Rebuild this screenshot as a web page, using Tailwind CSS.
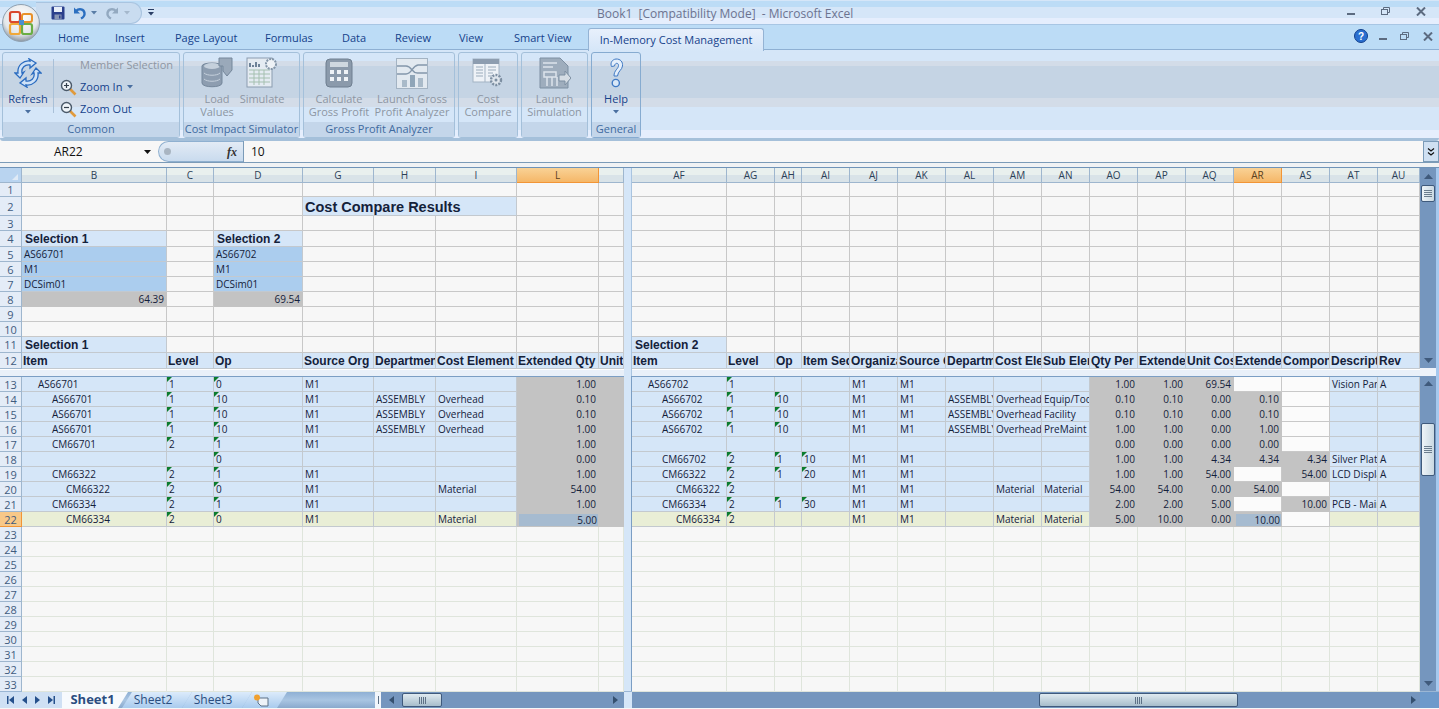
<!DOCTYPE html>
<html lang="en">
<head>
<meta charset="utf-8">
<title>Book1 [Compatibility Mode] - Microsoft Excel</title>
<script src="https://cdn.jsdelivr.net/npm/@tailwindcss/browser@4"></script>
</head>
<body class="m-0 overflow-hidden">
<div class="relative flex h-[709px] w-[1439px] flex-col overflow-hidden bg-[#f7f7f7] font-['Open_Sans',sans-serif] text-[11px] text-[#15428b]">

  <!-- office button -->
  <div class="absolute left-[2px] top-[4px] z-10 h-[38px] w-[38px]">
    <svg viewBox="0 0 38 38" class="h-full w-full">
      <defs><radialGradient id="orb" cx="50%" cy="35%" r="65%"><stop offset="0" stop-color="#ffffff"/><stop offset="0.7" stop-color="#e4e7ea"/><stop offset="1" stop-color="#8c97a3"/></radialGradient></defs>
      <circle cx="19" cy="19" r="18.5" fill="url(#orb)" stroke="#8fa0b0"/>
      <rect x="8" y="8" width="10" height="10" rx="2" fill="none" stroke="#d9482e" stroke-width="2.2"/>
      <rect x="20" y="10" width="10" height="8" rx="2" fill="none" stroke="#e8912a" stroke-width="2"/>
      <rect x="8" y="20" width="10" height="10" rx="2" fill="none" stroke="#f0a83a" stroke-width="2.2"/>
      <rect x="20" y="20" width="10" height="10" rx="2" fill="none" stroke="#6aae44" stroke-width="2.2"/>
      <rect x="17" y="16" width="5" height="5" fill="#4a8fd0"/>
    </svg>
  </div>

  <!-- title bar -->
  <div class="relative flex h-[25px] shrink-0 items-start border-b border-[#a8c6e4] bg-[linear-gradient(#d5e6f8_0,#d5e6f8_1px,#bcdcf6_1px,#bcdcf6_7px,#d5e6f8_7px,#d5e6f8_18px,#e5eefd_18px)]">
    <div class="ml-[36px] mt-[2px] flex h-[22px] w-[106px] items-center rounded-r-full border border-l-0 border-[#a9c4e0] bg-[#c9dcf0] pl-[15px]">
      <svg viewBox="0 0 14 14" class="h-[14px] w-[14px]"><rect x="0.5" y="0.5" width="13" height="13" rx="1" fill="#2b3f8c"/><rect x="3" y="1" width="8" height="5" fill="#e8eef8"/><rect x="3.5" y="8.5" width="7" height="5" fill="#8a97b5"/><rect x="8" y="9.5" width="1.5" height="3" fill="#2b3f8c"/></svg>
      <svg viewBox="0 0 14 14" class="ml-[8px] h-[14px] w-[14px]" fill="none"><path d="M3 5 C6 2 11 3 11.5 7 C11.8 9.5 10 11.5 8 12.5" stroke="#2c6fc0" stroke-width="2.4"/><path d="M1 1.5 V7.5 H7 Z" fill="#2c6fc0"/></svg>
      <svg viewBox="0 0 6 4" class="ml-[4px] h-[4px] w-[6px]"><path d="M0 0H6L3 3.5Z" fill="#5a7da6"/></svg>
      <svg viewBox="0 0 14 14" class="ml-[8px] h-[14px] w-[14px]" fill="none"><path d="M11 5 C8 2 3 3 2.5 7 C2.2 9.5 4 11.5 6 12.5" stroke="#93a9c0" stroke-width="2.4"/><path d="M13 1.5 V7.5 H7 Z" fill="#93a9c0"/></svg>
      <svg viewBox="0 0 6 4" class="ml-[5px] h-[4px] w-[6px]"><path d="M0 0H6L3 3.5Z" fill="#a5b8cc"/></svg>
    </div>
    <svg viewBox="0 0 6 7" class="ml-[6px] mt-[9px] h-[7px] w-[6px]"><path d="M0 0H6V1H0ZM0 3H6L3 6.5Z" fill="#2a3f66"/></svg>
    <div class="absolute left-[597px] top-[6px] whitespace-nowrap text-[12px] leading-[16px] text-[#6d7390]">Book1&nbsp; [Compatibility Mode]&nbsp; - Microsoft Excel</div>
    <div class="ml-auto mr-[13px] mt-[6px] flex items-center gap-[26px]">
      <svg viewBox="0 0 8 3" class="mt-[7px] h-[3px] w-[8px]"><rect width="8" height="2" fill="#5c6b80"/></svg>
      <svg viewBox="0 0 9 8" class="h-[8px] w-[9px]" fill="none" stroke="#5c6b80"><rect x="0.5" y="2.5" width="6" height="5"/><path d="M2.5 2V0.5H8.5V5.5H7"/></svg>
      <svg viewBox="0 0 10 9" class="h-[9px] w-[10px]"><path d="M1 0.5L9 8.5M9 0.5L1 8.5" stroke="#5c6b80" stroke-width="2"/></svg>
    </div>
  </div>

  <!-- tab strip -->
  <div class="flex h-[24px] shrink-0 items-center bg-[#bcdcf6] pl-[58px] pt-[3px] text-[11px] text-[#15428b]">
    <span class="w-[57px]">Home</span>
    <span class="w-[60px]">Insert</span>
    <span class="w-[90px]">Page Layout</span>
    <span class="w-[77px]">Formulas</span>
    <span class="w-[53px]">Data</span>
    <span class="w-[64px]">Review</span>
    <span class="w-[55px]">View</span>
    <span class="w-[74px]">Smart View</span>
    <span class="z-[1] -mb-[2px] flex h-[23px] w-[176px] items-center justify-center rounded-t-[3px] border border-b-0 border-[#94b3d4] bg-[linear-gradient(#e8f0fc,#d5e6f8)]">In-Memory Cost Management</span>
    <div class="ml-auto mr-[6px] -mt-[5px] flex items-center">
      <svg viewBox="0 0 14 14" class="h-[14px] w-[14px]"><circle cx="7" cy="7" r="6.5" fill="#2a6fd0" stroke="#123f8c"/><text x="7" y="10.5" text-anchor="middle" font-size="10" font-weight="700" fill="#fff" font-family="Liberation Sans">?</text></svg>
      <svg viewBox="0 0 8 3" class="ml-[11px] mt-[6px] h-[3px] w-[8px]"><rect width="8" height="2" fill="#5c6b80"/></svg>
      <svg viewBox="0 0 9 8" class="ml-[13px] h-[8px] w-[9px]" fill="none" stroke="#5c6b80"><rect x="0.5" y="2.5" width="6" height="5"/><path d="M2.5 2V0.5H8.5V5.5H7"/></svg>
      <svg viewBox="0 0 10 9" class="ml-[14px] h-[9px] w-[10px]"><path d="M1 0.5L9 8.5M9 0.5L1 8.5" stroke="#5c6b80" stroke-width="2"/></svg>
    </div>
  </div>

  <!-- ribbon -->
  <div class="flex h-[92px] shrink-0 gap-[3px] rounded-b-[3px] border-t border-b-[3px] border-t-[#8eb0d3] border-b-[#a5c0da] bg-[linear-gradient(#d5e6f8_0,#d5e6f8_11px,#d3dce8_11px,#d3dce8_16px,#c5d4e4_16px,#c5d4e4_48px,#d3dce8_48px,#d3dce8_57px,#d5e6f8_57px,#d5e6f8_80px,#e5eefd_80px)] pl-[2px] pt-[2px]">

    <div class="flex h-[86px] w-[178px] flex-col rounded-[3px] border border-[#a4c0da]">
      <div class="flex h-[69px] flex-1">
        <div class="flex w-[50px] flex-col items-center pt-[5px]">
          <svg viewBox="0 0 28 30" class="h-[30px] w-[28px]" fill="#cfe2f7" stroke="#2b6cc0" stroke-width="1.3"><path d="M4 15 C3 7 10 2 16 3 L15 0.8 L22 5 L16 10 L16 7 C11 6 7 10 8 15 L10 14 L6 20 L1 15 Z"/><path d="M24 15 C25 23 18 28 12 27 L13 29.2 L6 25 L12 20 L12 23 C17 24 21 20 20 15 L18 16 L22 10 L27 15 Z"/></svg>
          <span class="mt-[4px] leading-[13px] text-[#15428b]">Refresh</span>
          <svg viewBox="0 0 6 4" class="mt-[5px] h-[4px] w-[6px]"><path d="M0 0H6L3 3.5Z" fill="#4a6fa0"/></svg>
        </div>
        <div class="mt-[6px] h-[54px] w-px bg-[#a9c0d8]"></div>
        <div class="flex flex-col pl-[6px] pt-[3px]">
          <div class="h-[20px] pl-[20px] leading-[18px] text-[#8d96a3]">Member Selection</div>
          <div class="flex h-[22px] items-center">
            <svg viewBox="0 0 17 17" class="h-[17px] w-[17px]" fill="none"><path d="M10 10L15.5 15.5" stroke="#e09a3c" stroke-width="2.6"/><circle cx="6.5" cy="6.5" r="5" fill="#eef3f8" stroke="#4b5a6a" stroke-width="1.4"/><path d="M4 6.5H9M6.5 4V9" stroke="#333f4c" stroke-width="1.2"/></svg>
            <span class="ml-[3px]">Zoom In</span>
            <svg viewBox="0 0 6 4" class="ml-[5px] h-[4px] w-[6px]"><path d="M0 0H6L3 3.5Z" fill="#4a6fa0"/></svg>
          </div>
          <div class="flex h-[22px] items-center">
            <svg viewBox="0 0 17 17" class="h-[17px] w-[17px]" fill="none"><path d="M10 10L15.5 15.5" stroke="#e09a3c" stroke-width="2.6"/><circle cx="6.5" cy="6.5" r="5" fill="#eef3f8" stroke="#4b5a6a" stroke-width="1.4"/><path d="M4 6.5H9" stroke="#333f4c" stroke-width="1.2"/></svg>
            <span class="ml-[3px]">Zoom Out</span>
          </div>
        </div>
      </div>
      <div class="h-[15px] bg-[#c4d6ea] text-center leading-[14px] text-[#3e6aa0]">Common</div>
    </div>

    <div class="flex h-[86px] w-[117px] flex-col rounded-[3px] border border-[#a4c0da]">
      <div class="flex flex-1 pl-[11px] text-center leading-[13px] text-[#8d96a3]">
        <div class="flex w-[44px] flex-col items-center pt-[4px]">
          <svg viewBox="0 0 32 32" class="h-[32px] w-[32px]"><path d="M1 9 C1 5 21 5 21 9 V26 C21 31 1 31 1 26Z" fill="#8d9db0" stroke="#75879b"/><ellipse cx="11" cy="9" rx="8" ry="3" fill="#c5d0dc"/><path d="M3 16 C6 19 16 19 19 16M3 22 C6 25 16 25 19 22" stroke="#c5d0dc" fill="none"/><path d="M18 1H31V13L26 19L22 14V9H18Z" fill="#9aa9ba" stroke="#75879b"/></svg>
          <span class="mt-[3px]">Load<br>Values</span>
        </div>
        <div class="flex w-[46px] flex-col items-center pt-[4px]">
          <svg viewBox="0 0 32 32" class="h-[32px] w-[32px]" fill="none"><rect x="1" y="1" width="25" height="29" fill="#e4ebf2" stroke="#8b9caf"/><path d="M4 10V6M7 10V8M10 10V5M13 10V7" stroke="#6d8298" stroke-width="2"/><path d="M3 13H24M3 17H24M3 21H24M3 25H24M8 13V28M13 13V28M18 13V28" stroke="#a5c0b0"/><circle cx="25" cy="7" r="5" fill="#eef2f6" stroke="#8395a8" stroke-width="2" stroke-dasharray="2 1"/></svg>
          <span class="mt-[3px]">Simulate</span>
        </div>
      </div>
      <div class="h-[15px] whitespace-nowrap bg-[#c4d6ea] text-center leading-[14px] text-[#3e6aa0]">Cost Impact Simulator</div>
    </div>

    <div class="flex h-[86px] w-[152px] flex-col rounded-[3px] border border-[#a4c0da]">
      <div class="flex flex-1 text-center leading-[13px] text-[#8d96a3]">
        <div class="flex w-[70px] flex-col items-center whitespace-nowrap pt-[5px]">
          <svg viewBox="0 0 28 31" class="h-[31px] w-[28px]"><rect x="1" y="1" width="26" height="28" rx="4" fill="#8b9aab" stroke="#6f7f90"/><rect x="5" y="4" width="18" height="5" fill="#cfd8e0"/><g fill="#eef2f6"><rect x="5" y="12" width="4" height="4"/><rect x="12" y="12" width="4" height="4"/><rect x="19" y="12" width="4" height="4"/><rect x="5" y="19" width="4" height="4"/><rect x="12" y="19" width="4" height="4"/><rect x="19" y="19" width="4" height="4"/></g></svg>
          <span class="mt-[3px]">Calculate<br>Gross Profit</span>
        </div>
        <div class="flex w-[76px] flex-col items-center whitespace-nowrap pt-[5px]">
          <svg viewBox="0 0 32 31" class="h-[31px] w-[32px]" fill="none"><rect x="0.5" y="0.5" width="31" height="30" fill="#e2e9f0" stroke="#a3b3c3"/><path d="M1 8H10C16 8 16 16 22 15H31M1 16H10C16 16 16 8 22 7H31" stroke="#8497ab" stroke-width="1.4"/><rect x="6" y="22" width="5" height="7" fill="#a9bac9"/><rect x="14" y="17" width="5" height="12" fill="#8fa5b8"/><rect x="22" y="20" width="5" height="9" fill="#a9bac9"/></svg>
          <span class="mt-[3px]">Launch Gross<br>Profit Analyzer</span>
        </div>
      </div>
      <div class="h-[15px] bg-[#c4d6ea] text-center leading-[14px] text-[#3e6aa0]">Gross Profit Analyzer</div>
    </div>

    <div class="flex h-[86px] w-[60px] flex-col rounded-[3px] border border-[#a4c0da]">
      <div class="flex flex-1 flex-col items-center pt-[5px] text-center leading-[13px] text-[#8d96a3]">
        <svg viewBox="0 0 32 30" class="h-[30px] w-[32px]"><rect x="1" y="1" width="26" height="23" fill="#eef2f7" stroke="#a3b3c3"/><rect x="1" y="1" width="26" height="5" fill="#8d9db0"/><path d="M4 9H11M4 12H11M4 15H11M4 18H11M16 9H24M16 12H24M16 15H21M16 18H20" stroke="#9aabbb"/><path d="M13 6V24" stroke="#a3b3c3"/><circle cx="24" cy="22" r="5" fill="#dfe6ed" stroke="#7d8fa2" stroke-width="2.4" stroke-dasharray="2 1.2"/><circle cx="24" cy="22" r="1.5" fill="#7d8fa2"/></svg>
        <span class="mt-[4px]">Cost<br>Compare</span>
      </div>
      <div class="h-[15px] bg-[#c4d6ea]"></div>
    </div>

    <div class="flex h-[86px] w-[67px] flex-col rounded-[3px] border border-[#a4c0da]">
      <div class="flex flex-1 flex-col items-center pt-[4px] text-center leading-[13px] text-[#8d96a3]">
        <svg viewBox="0 0 32 32" class="h-[32px] w-[32px]" fill="none"><path d="M1 1H21L29 9V31H1Z" fill="#9eadbd" stroke="#7d8fa2"/><path d="M4 6H18M4 10H14M5 15H17V20H5ZM8 20V29M13 20V29M18 20V29" stroke="#dde4eb" stroke-width="1.5"/><path d="M20 18H26V14L32 21L26 28V24H20Z" fill="#d4dce4" stroke="#7d8fa2"/></svg>
        <span class="mt-[3px]">Launch<br>Simulation</span>
      </div>
      <div class="h-[15px] bg-[#c4d6ea]"></div>
    </div>

    <div class="flex h-[86px] w-[50px] flex-col rounded-[3px] border border-[#86abd0]">
      <div class="flex flex-1 flex-col items-center pt-[5px] text-center leading-[13px] text-[#15428b]">
        <svg viewBox="0 0 16 30" class="h-[30px] w-[16px]" fill="none"><path d="M3.5 8.5 C2 5 4 1.5 8 1 C12.5 0.8 15 4 14.5 8 C14 12 10 13 9.5 18 H6 C6 12 10.5 11 10.5 7.5 C10.5 4.5 7 4.5 6.5 8 Z" fill="#e5effb" stroke="#3f79c4"/><circle cx="7.8" cy="25" r="3.6" fill="#d9e8f8" stroke="#3f79c4" stroke-width="1.4"/></svg>
        <span class="mt-[4px]">Help</span>
        <svg viewBox="0 0 6 4" class="mt-[5px] h-[4px] w-[6px]"><path d="M0 0H6L3 3.5Z" fill="#4a6fa0"/></svg>
      </div>
      <div class="h-[15px] bg-[#c4d6ea] text-center leading-[14px] text-[#3e6aa0]">General</div>
    </div>
  </div>

  <!-- formula bar -->
  <div class="flex h-[22px] shrink-0 items-center border-b border-[#7b9bb8] bg-[#f7f7f7] text-[#111]">
    <span class="ml-[54px] w-[90px] text-[12px]">AR22</span>
    <svg viewBox="0 0 7 4" class="h-[4px] w-[7px]"><path d="M0 0H7L3.5 4Z" fill="#111"/></svg>
    <div class="ml-[7px] flex h-[21px] w-[85px] items-center justify-between rounded-l-full border border-r-0 border-[#8fb0d0] bg-[linear-gradient(#e3ebf5,#c9dbee)] pl-[5px] pr-[6px]">
      <span class="h-[7px] w-[7px] rounded-full bg-[#a9b5c2]"></span>
      <span class="font-['Liberation_Serif',serif] text-[12px] font-bold italic leading-none text-[#333]">fx</span>
    </div>
    <div class="flex h-[21px] flex-1 items-center border-l border-[#7b9bb8] pl-[7px] text-[12px]">10</div>
    <div class="flex h-[21px] w-[16px] items-center justify-center border border-[#7b9bb8] bg-[#cfe0f2]">
      <svg viewBox="0 0 8 8" class="h-[8px] w-[8px]" fill="none" stroke="#111" stroke-width="1.2"><path d="M1 0.5L4 3L7 0.5M1 4.5L4 7L7 4.5"/></svg>
    </div>
  </div>
  <div class="h-[4px] shrink-0 bg-[#f0f2f4]"></div>

  <!-- sheet panes -->
  <div class="flex h-[524px] shrink-0 border-t border-[#6f93b8]">
    <div class="w-[624px] shrink-0">
      <div id="leftTop"></div>
      <div class="h-[8px] border-t border-b border-t-white border-b-[#7b9ec4] bg-[#e9f0f9]"></div>
      <div id="leftBottom"></div>
    </div>
    <div class="flex w-[8px] shrink-0 flex-col bg-[#d5e6f8]">
      <div class="h-[208px] border-r border-[#a9c4e0]"></div>
      <div class="flex-1 border-r border-[#7b9ec4]"></div>
    </div>
    <div class="w-[788px] shrink-0">
      <div id="rightTop"></div>
      <div class="h-[8px] border-t border-b border-t-white border-b-[#7b9ec4] bg-[#e9f0f9]"></div>
      <div id="rightBottom"></div>
    </div>
    <div class="flex w-[16px] shrink-0 flex-col">
      <div class="flex h-[200px] flex-col items-center bg-[#7596be] pt-[6px]">
        <svg viewBox="0 0 9 5" class="h-[5px] w-[9px]"><path d="M4.5 0L9 5H0Z" fill="#3f5a7c"/></svg>
        <div class="mt-[6px] flex h-[17px] w-[14px] items-center justify-center rounded-[2px] border border-[#3f5a7c] bg-[linear-gradient(90deg,#eef4f8,#c9d8e2)]">
          <svg viewBox="0 0 8 7" class="h-[7px] w-[8px]"><path d="M0 .5H8M0 2.5H8M0 4.5H8M0 6.5H8" stroke="#6b7d8e"/></svg>
        </div>
        <svg viewBox="0 0 9 5" class="mt-auto mb-[5px] h-[5px] w-[9px]"><path d="M0 0H9L4.5 5Z" fill="#3f5a7c"/></svg>
      </div>
      <div class="h-[8px] bg-[#eef3fa]"></div>
      <div class="flex flex-1 flex-col items-center bg-[#7596be] pt-[5px]">
        <svg viewBox="0 0 9 5" class="h-[5px] w-[9px]"><path d="M4.5 0L9 5H0Z" fill="#3f5a7c"/></svg>
        <div class="mt-[37px] flex h-[53px] w-[14px] items-center justify-center rounded-[2px] border border-[#3f5a7c] bg-[linear-gradient(90deg,#eef4f8,#c9d8e2)]">
          <svg viewBox="0 0 8 7" class="h-[7px] w-[8px]"><path d="M0 .5H8M0 2.5H8M0 4.5H8M0 6.5H8" stroke="#6b7d8e"/></svg>
        </div>
        <svg viewBox="0 0 9 5" class="mt-auto mb-[5px] h-[5px] w-[9px]"><path d="M0 0H9L4.5 5Z" fill="#3f5a7c"/></svg>
      </div>
    </div>
    <div class="w-[3px] shrink-0 bg-[#a5c8ee]"></div>
  </div>

  <!-- sheet tabs and horizontal scrollbars -->
  <div class="flex h-[17px] shrink-0 border-t border-[#9ab6d4] bg-[#7596be]">
    <div class="flex w-[62px] shrink-0 items-center justify-around bg-[#cfe0f4] px-[3px]">
      <svg viewBox="0 0 7 8" class="h-[8px] w-[7px]"><path d="M0 0H1.5V8H0ZM7 0V8L2 4Z" fill="#25508c"/></svg>
      <svg viewBox="0 0 5 8" class="h-[8px] w-[5px]"><path d="M5 0V8L0 4Z" fill="#25508c"/></svg>
      <svg viewBox="0 0 5 8" class="h-[8px] w-[5px]"><path d="M0 0V8L5 4Z" fill="#25508c"/></svg>
      <svg viewBox="0 0 7 8" class="h-[8px] w-[7px]"><path d="M7 0H5.5V8H7ZM0 0V8L5 4Z" fill="#25508c"/></svg>
    </div>
    <div class="flex w-[313px] shrink-0 bg-[linear-gradient(#8fb0d4,#a9c5e2,#8aa9cd)]">
      <div class="z-[3] flex w-[66px] shrink-0 items-center justify-center bg-[#f7fafd] pb-[1px] pr-[5px] text-[13px] font-bold leading-none text-[#2a4d80] [clip-path:polygon(0_0,100%_0,calc(100%-10px)_100%,0_100%)]">Sheet1</div>
      <div class="z-[2] -ml-[6px] flex w-[70px] shrink-0 items-center justify-center bg-[linear-gradient(#dcebfb,#a9cbee)] pr-[8px] text-[12px] leading-none text-[#2a4d80] [clip-path:polygon(10px_0,100%_0,calc(100%-10px)_100%,0_100%)]">Sheet2</div>
      <div class="z-[1] -ml-[10px] flex w-[70px] shrink-0 items-center justify-center bg-[linear-gradient(#dcebfb,#a9cbee)] pr-[8px] text-[12px] leading-none text-[#2a4d80] [clip-path:polygon(10px_0,100%_0,calc(100%-10px)_100%,0_100%)]">Sheet3</div>
      <div class="-ml-[10px] flex w-[45px] shrink-0 items-center justify-center bg-[linear-gradient(#dcebfb,#a9cbee)] pr-[8px] [clip-path:polygon(10px_0,100%_0,calc(100%-10px)_100%,0_100%)]">
        <svg viewBox="0 0 16 13" class="h-[13px] w-[16px]" fill="none"><path d="M5 4H15V12H8L5 9Z" fill="#eef3f8" stroke="#5d7186"/><circle cx="4" cy="3.5" r="3" fill="#f0a030"/></svg>
      </div>
    </div>
    <div class="flex w-[6px] shrink-0 items-center justify-center bg-[#f2f6fb]"><div class="h-[8px] w-px bg-[#5d7186]"></div></div>
    <div class="flex w-[21px] shrink-0 items-center justify-center"><svg viewBox="0 0 5 8" class="h-[8px] w-[5px]"><path d="M5 0V8L0 4Z" fill="#35506f"/></svg></div>
    <div class="mt-[1px] flex h-[14px] w-[40px] shrink-0 items-center justify-center rounded-[2px] border border-[#3f5a7c] bg-[linear-gradient(#dfeaf0,#a7bdcb)]">
      <svg viewBox="0 0 7 7" class="h-[7px] w-[7px]"><path d="M.5 0V7M2.5 0V7M4.5 0V7M6.5 0V7" stroke="#5d7186"/></svg>
    </div>
    <div class="flex flex-1 items-center justify-end pr-[6px]"><svg viewBox="0 0 5 8" class="h-[8px] w-[5px]"><path d="M0 0V8L5 4Z" fill="#35506f"/></svg></div>
    <div class="w-[8px] shrink-0 bg-[#d5e6f8]"></div>
    <div class="w-[407px] shrink-0"></div>
    <div class="mt-[1px] flex h-[14px] w-[199px] shrink-0 items-center justify-center rounded-[2px] border border-[#3f5a7c] bg-[linear-gradient(#dfeaf0,#a7bdcb)]">
      <svg viewBox="0 0 7 7" class="h-[7px] w-[7px]"><path d="M.5 0V7M2.5 0V7M4.5 0V7M6.5 0V7" stroke="#5d7186"/></svg>
    </div>
    <div class="flex w-[182px] shrink-0 items-center justify-end pr-[4px]"><svg viewBox="0 0 5 8" class="h-[8px] w-[5px]"><path d="M0 0V8L5 4Z" fill="#35506f"/></svg></div>
    <div class="w-[19px] shrink-0 bg-[#6d9acb]"></div>
  </div>
</div>

<script>
  const gridLeft = 'grid grid-cols-[22px_145px_47px_89px_71px_62px_81px_82px_25px]';
  const gridRight = 'grid grid-cols-[95px_48px_27px_48px_48px_48px_48px_48px_48px_48px_48px_48px_48px_48px_48px_42px]';
  const base = 'relative flex items-center overflow-hidden whitespace-nowrap border-r border-b px-[2px] text-[10px] leading-none text-[#14213a] ';
  const kinds = {
    empty: base + 'border-[#c8c8c8] bg-[#f7f7f7]',
    faint: base + 'border-[#dfe5dc] bg-[#f7f7f7]',
    blue: base + 'border-[#c3c9cf] bg-[#d5e6f8]',
    mid: base + 'border-[#c3c9cf] bg-[#abcdee]',
    gray: base + 'justify-end border-[#c3c3c3] bg-[#c3c3c3]',
    white: base + 'border-[#c8c8c8] bg-[#fbfbfb]',
    green: base + 'border-[#c3c9cf] bg-[#e9eed6]',
    sel: base + 'justify-end border-[2px] border-[#c3c3c3] bg-[#a6bbd0] px-0 pr-[1px]',
    head: base + "border-[#c3c9cf] bg-[#d5e6f8] pl-[1px] font-['Liberation_Sans',sans-serif] text-[12px] font-bold text-[#111]",
    title: base + "border-[#c3c9cf] bg-[#d5e6f8] pl-[3px] font-['Liberation_Sans',sans-serif] text-[12px] font-bold text-[#111]",
    bigtitle: base + "col-span-3 border-[#c3c9cf] bg-[#d5e6f8] pl-[2px] pt-[2px] font-['Liberation_Sans',sans-serif] text-[14.5px] font-bold text-[#111]",
  };
  const flag = '<span class="absolute left-0 top-0 h-0 w-0 border-r-[5px] border-t-[5px] border-r-transparent border-t-[#0b7c2e]"></span>';

  function cell(c, fallback) {
    if (c === undefined || c === null || c === '') return `<div class="${kinds[fallback]}"></div>`;
    if (typeof c === 'string') return `<div class="${kinds[fallback]}">${c}</div>`;
    const cls = kinds[c.k || fallback];
    const pad = c.i ? `<span style="padding-left:${c.i * 14}px">${c.t}</span>` : (c.t || '');
    return `<div class="${cls}">${c.f ? flag : ''}${pad}</div>`;
  }
  function rowHead(n, sel) {
    const cls = sel
      ? 'border-[#f29536] bg-[#f8c888]'
      : 'border-[#9eb6ce] bg-[#e4ecf7]';
    return `<div class="flex items-center justify-center border-r border-b ${cls} text-[11px] leading-none text-[#3f5b7e]">${n}</div>`;
  }
  function colHead(name, sel) {
    const cls = sel
      ? 'border-[#f29536] bg-[linear-gradient(#f9d296,#f5b768)] text-[#5a4020]'
      : 'border-[#9eb6ce] bg-[linear-gradient(#e9f0ee_0,#e9f0ee_7px,#d9e3e8_7px)] text-[#2c3f57]';
    return `<div class="flex items-center justify-center border-r border-b ${cls} text-[10px] leading-none">${name}</div>`;
  }
  function row(tpl, h, cells) {
    return `<div class="${tpl}" style="height:${h}px">${cells.join('')}</div>`;
  }

  // left pane, top
  const lt = [
    `<div class="${gridLeft} h-[15px]"><div class="flex items-center justify-center border-r border-b border-[#9eb6ce] bg-[#b9d4f0]"><svg viewBox="0 0 6 6" class="ml-auto mr-[3px] mt-auto mb-[2px] h-[6px] w-[6px]"><path d="M6 0V6H0Z" fill="#dfeaf6"/></svg></div>${['B','C','D','G','H','I'].map(n => colHead(n)).join('')}${colHead('L', true)}${colHead('')}</div>`
  ];
  const rt = [
    `<div class="${gridRight} h-[15px]">${['AF','AG','AH','AI','AJ','AK','AL','AM','AN','AO','AP','AQ'].map(n => colHead(n)).join('')}${colHead('AR', true)}${['AS','AT','AU'].map(n => colHead(n)).join('')}</div>`
  ];
  const heights = { 1:14, 2:19, 3:15, 4:16, 5:15, 6:15, 7:15, 8:15, 9:15, 10:15, 11:16, 12:16 };
  const lTop = {
    4: [{t:'Selection 1',k:'title'}, '', {t:'Selection 2',k:'title'}],
    5: [{t:'AS66701',k:'mid'}, '', {t:'AS66702',k:'mid'}],
    6: [{t:'M1',k:'mid'}, '', {t:'M1',k:'mid'}],
    7: [{t:'DCSim01',k:'mid'}, '', {t:'DCSim01',k:'mid'}],
    8: [{t:'64.39',k:'gray'}, '', {t:'69.54',k:'gray'}],
    11: [{t:'Selection 1',k:'title'}],
    12: ['Item','Level','Op','Source Org','Department','Cost Element','Extended Qty','Unit'].map(t => ({t,k:'head'})),
  };
  for (let n = 1; n <= 12; n++) {
    const c = [rowHead(n)];
    for (let i = 0; i < 8; i++) {
      if (n === 2 && i === 3) { c.push(cell({t:'Cost Compare Results',k:'bigtitle'}, 'empty')); i = 5; continue; }
      c.push(cell((lTop[n] || [])[i], 'empty'));
    }
    lt.push(row(gridLeft, heights[n], c));
  }
  const rHead = ['Item','Level','Op','Item Seq','Organization','Source Org','Department','Cost Element','Sub Element','Qty Per','Extended','Unit Cost','Extended','Component','Description','Rev'];
  for (let n = 1; n <= 12; n++) {
    const c = [];
    for (let i = 0; i < 16; i++) {
      if (n === 11 && i === 0) c.push(cell({t:'Selection 2',k:'title'}, 'empty'));
      else if (n === 12) c.push(cell({t:rHead[i],k:'head'}, 'empty'));
      else c.push(cell('', 'empty'));
    }
    rt.push(row(gridRight, heights[n], c));
  }
  document.getElementById('leftTop').innerHTML = lt.join('');
  document.getElementById('rightTop').innerHTML = rt.join('');

  // rows 13-22: item, indent, level, op, org, dept, element, qty
  const leftData = [
    ['AS66701',1,'1','0','M1','','','1.00'],
    ['AS66701',2,'1','10','M1','ASSEMBLY','Overhead','0.10'],
    ['AS66701',2,'1','10','M1','ASSEMBLY','Overhead','0.10'],
    ['AS66701',2,'1','10','M1','ASSEMBLY','Overhead','1.00'],
    ['CM66701',2,'2','1','M1','','','1.00'],
    ['',0,'','0','','','','0.00'],
    ['CM66322',2,'2','1','M1','','','1.00'],
    ['CM66322',3,'2','0','M1','','Material','54.00'],
    ['CM66334',2,'2','1','M1','','','1.00'],
    ['CM66334',3,'2','0','M1','','Material','5.00'],
  ];
  const lb = leftData.map((d, idx) => {
    const n = idx + 13, last = n === 22, bg = last ? 'green' : 'blue';
    return row(gridLeft, 15, [
      rowHead(n, last),
      cell(d[0] ? {t:d[0], i:d[1], k:bg} : '', bg),
      cell(d[2] ? {t:d[2], f:1, k:bg} : '', bg),
      cell(d[3] ? {t:d[3], f:1, k:bg} : '', bg),
      cell(d[4], bg), cell(d[5], bg), cell(d[6], bg),
      cell({t:d[7], k: last ? 'sel' : 'gray'}, 'gray'),
      cell('', 'gray'),
    ]);
  });

  // item, indent, level, op, seq, org, source, dept, element, sub, qty, ext, unit, ext cost, component, description, rev
  const rightData = [
    ['AS66702',1,'1','','','M1','M1','','','','1.00','1.00','69.54',null,null,'Vision Panel','A'],
    ['AS66702',2,'1','10','','M1','M1','ASSEMBLY','Overhead','Equip/Tooling','0.10','0.10','0.00','0.10',null,'',''],
    ['AS66702',2,'1','10','','M1','M1','ASSEMBLY','Overhead','Facility','0.10','0.10','0.00','0.10',null,'',''],
    ['AS66702',2,'1','10','','M1','M1','ASSEMBLY','Overhead','PreMaint','1.00','1.00','0.00','1.00',null,'',''],
    ['',0,'','','','','','','','','0.00','0.00','0.00','0.00',null,'',''],
    ['CM66702',2,'2','1','10','M1','M1','','','','1.00','1.00','4.34','4.34','4.34','Silver Plate','A'],
    ['CM66322',2,'2','1','20','M1','M1','','','','1.00','1.00','54.00',null,'54.00','LCD Display','A'],
    ['CM66322',3,'2','','','M1','M1','','Material','Material','54.00','54.00','0.00','54.00',null,'',''],
    ['CM66334',2,'2','1','30','M1','M1','','','','2.00','2.00','5.00',null,'10.00','PCB - Main','A'],
    ['CM66334',3,'2','','','M1','M1','','Material','Material','5.00','10.00','0.00','10.00',null,'',''],
  ];
  const rb = rightData.map((d, idx) => {
    const last = idx === 9, bg = last ? 'green' : 'blue';
    const flagged = v => v ? {t:v, f:1, k:bg} : '';
    return row(gridRight, 15, [
      cell(d[0] ? {t:d[0], i:d[1], k:bg} : '', bg),
      cell(flagged(d[2]), bg), cell(flagged(d[3]), bg), cell(flagged(d[4]), bg),
      cell(d[5], bg), cell(d[6], bg), cell(d[7], bg), cell(d[8], bg), cell(d[9], bg),
      cell({t:d[10]}, 'gray'), cell({t:d[11]}, 'gray'), cell({t:d[12]}, 'gray'),
      d[13] === null ? cell('', 'white') : cell({t:d[13], k: last ? 'sel' : 'gray'}, 'gray'),
      d[14] === null ? cell('', 'white') : cell({t:d[14]}, 'gray'),
      cell(d[15], bg), cell(d[16], bg),
    ]);
  });

  // empty rows 23-33
  for (let n = 23; n <= 33; n++) {
    const l = [rowHead(n)];
    for (let i = 0; i < 8; i++) l.push(cell('', 'faint'));
    lb.push(row(gridLeft, 15, l));
    const r = [];
    for (let i = 0; i < 16; i++) r.push(cell('', 'faint'));
    rb.push(row(gridRight, 15, r));
  }
  document.getElementById('leftBottom').innerHTML = lb.join('');
  document.getElementById('rightBottom').innerHTML = rb.join('');
</script>
</body>
</html>
